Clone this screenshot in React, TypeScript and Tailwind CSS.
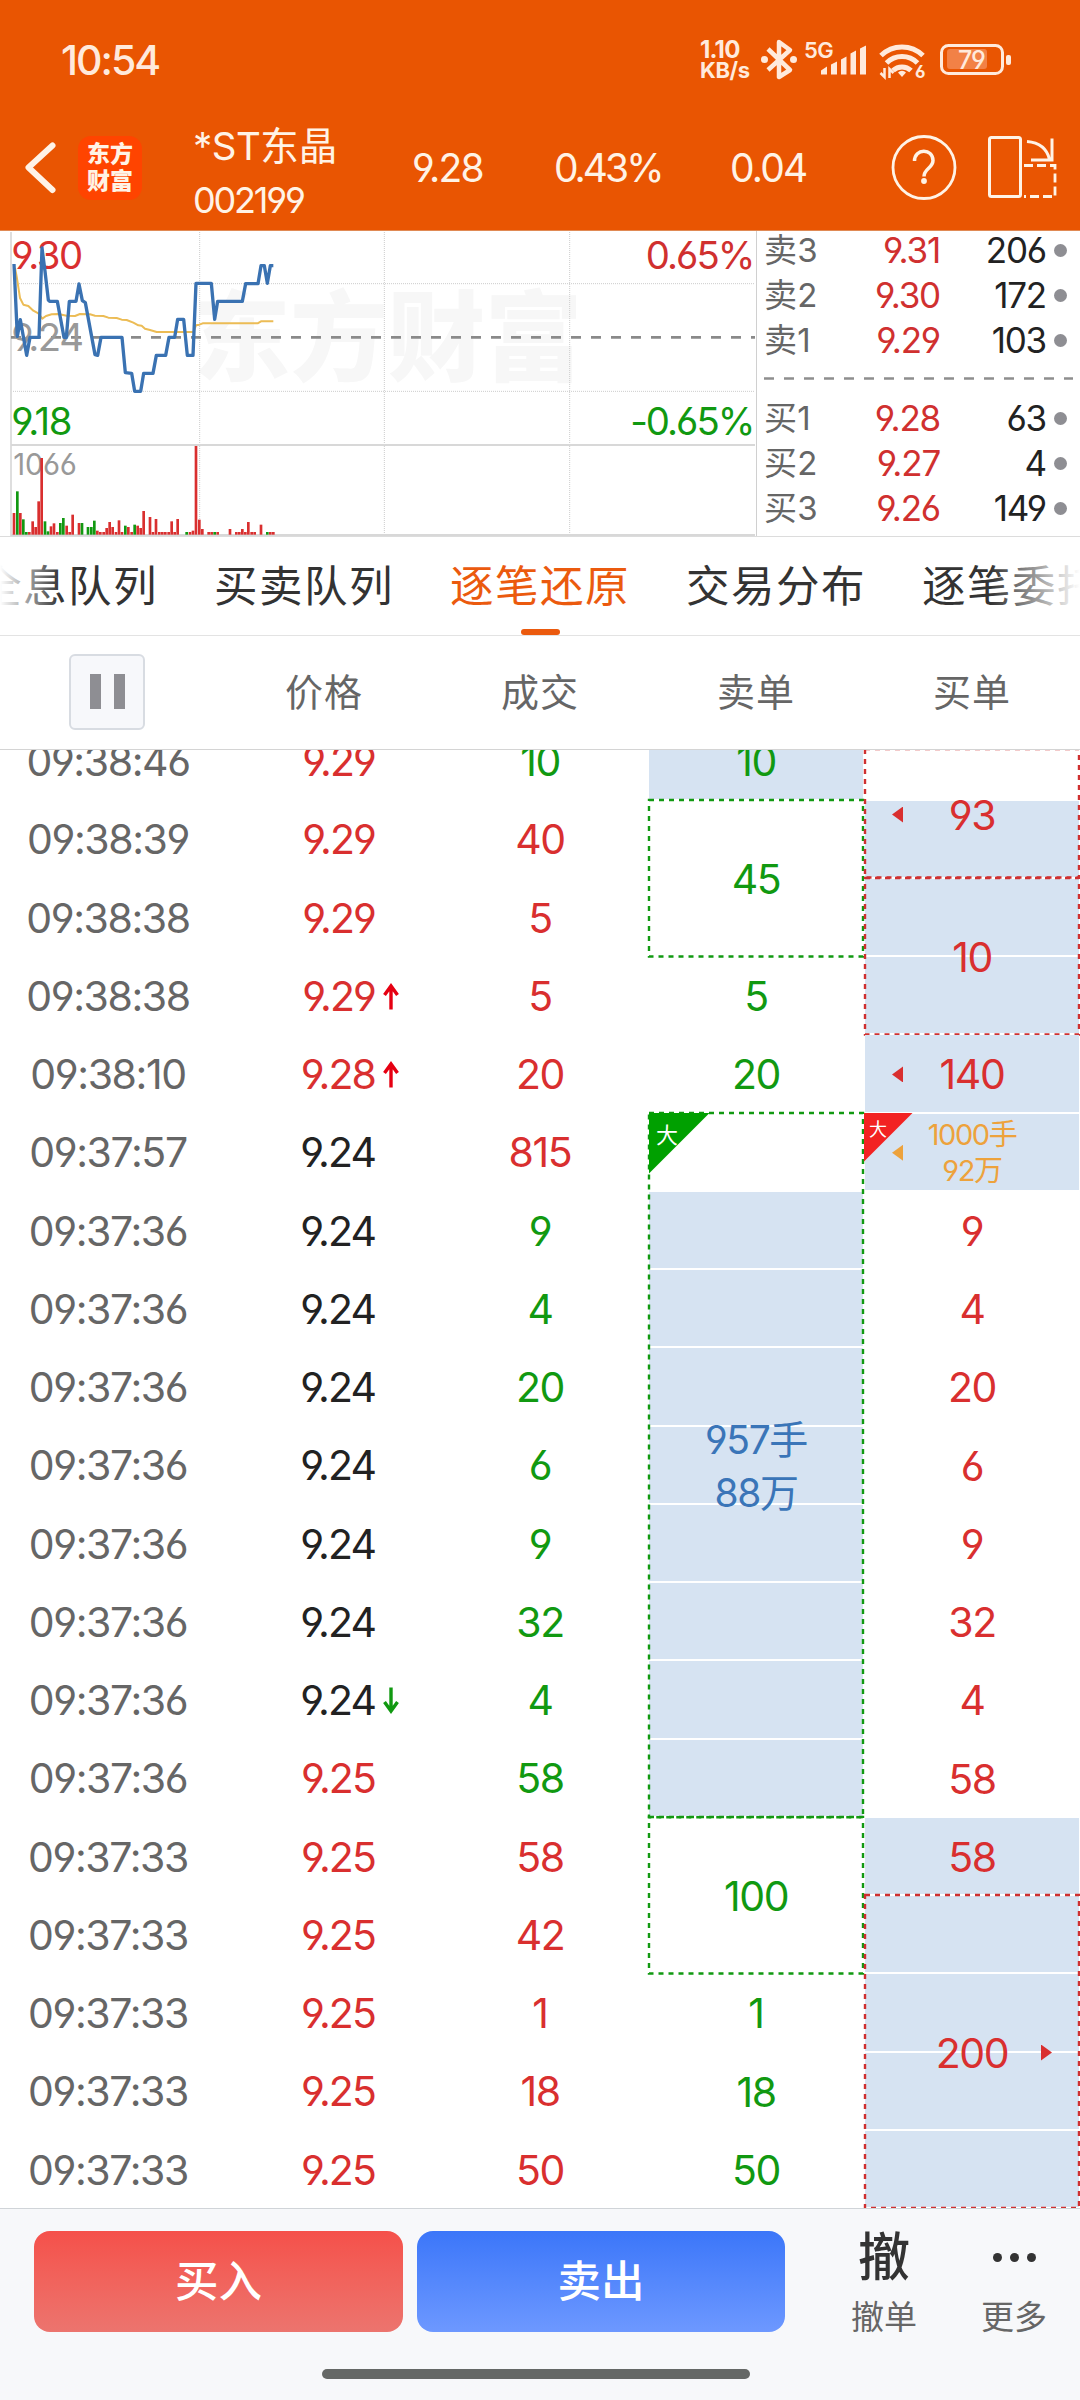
import React from 'react';

type Tone = 'red' | 'green' | 'dark' | 'blue' | 'orange';

interface Tick {
  time: string;
  price: string;
  priceTone: Tone;
  volume: string;
  volumeTone: Tone;
  arrow?: 'up' | 'down';
}

interface OrderBlock {
  // one entry per row, true when the row is shaded
  cells: boolean[];
  lines: string[];
  tone: Tone;
  boxed?: boolean;
  big?: boolean;
  small?: boolean;
  pointer?: 'left' | 'right';
  clipped?: boolean;
}

const toneClass: Record<Tone, string> = {
  red: 'text-[#d92f2f]',
  green: 'text-[#119911]',
  dark: 'text-[#222222]',
  blue: 'text-[#3a75b8]',
  orange: 'text-[#eda23c]',
};

const tick = (
  time: string,
  price: string,
  priceTone: Tone,
  volume: string,
  volumeTone: Tone,
  arrow?: 'up' | 'down',
): Tick => ({ time, price, priceTone, volume, volumeTone, arrow });

const ticks: Tick[] = [
  tick('09:38:46', '9.29', 'red', '10', 'green'),
  tick('09:38:39', '9.29', 'red', '40', 'red'),
  tick('09:38:38', '9.29', 'red', '5', 'red'),
  tick('09:38:38', '9.29', 'red', '5', 'red', 'up'),
  tick('09:38:10', '9.28', 'red', '20', 'red', 'up'),
  tick('09:37:57', '9.24', 'dark', '815', 'red'),
  tick('09:37:36', '9.24', 'dark', '9', 'green'),
  tick('09:37:36', '9.24', 'dark', '4', 'green'),
  tick('09:37:36', '9.24', 'dark', '20', 'green'),
  tick('09:37:36', '9.24', 'dark', '6', 'green'),
  tick('09:37:36', '9.24', 'dark', '9', 'green'),
  tick('09:37:36', '9.24', 'dark', '32', 'green'),
  tick('09:37:36', '9.24', 'dark', '4', 'green', 'down'),
  tick('09:37:36', '9.25', 'red', '58', 'green'),
  tick('09:37:33', '9.25', 'red', '58', 'red'),
  tick('09:37:33', '9.25', 'red', '42', 'red'),
  tick('09:37:33', '9.25', 'red', '1', 'red'),
  tick('09:37:33', '9.25', 'red', '18', 'red'),
  tick('09:37:33', '9.25', 'red', '50', 'red'),
];

const single = (text: string, tone: Tone, shaded = false): OrderBlock => ({
  cells: [shaded],
  lines: [text],
  tone,
});

const sellOrders: OrderBlock[] = [
  single('10', 'green', true),
  { cells: [false, false], lines: ['45'], tone: 'green', boxed: true },
  single('5', 'green'),
  single('20', 'green'),
  {
    cells: [false, true, true, true, true, true, true, true, true],
    lines: ['957手', '88万'],
    tone: 'blue',
    boxed: true,
    big: true,
  },
  { cells: [false, false], lines: ['100'], tone: 'green', boxed: true },
  single('1', 'green'),
  single('18', 'green'),
  single('50', 'green'),
];

const buyOrders: OrderBlock[] = [
  { cells: [false, true], lines: ['93'], tone: 'red', boxed: true, pointer: 'left', clipped: true },
  { cells: [true, true], lines: ['10'], tone: 'red', boxed: true },
  { cells: [true], lines: ['140'], tone: 'red', pointer: 'left' },
  { cells: [true], lines: ['1000手', '92万'], tone: 'orange', big: true, small: true, pointer: 'left' },
  single('9', 'red'),
  single('4', 'red'),
  single('20', 'red'),
  single('6', 'red'),
  single('9', 'red'),
  single('32', 'red'),
  single('4', 'red'),
  single('58', 'red'),
  single('58', 'red', true),
  { cells: [true, true, true, true], lines: ['200'], tone: 'red', boxed: true, pointer: 'right' },
];

const asks = [
  ['卖3', '9.31', '206'],
  ['卖2', '9.30', '172'],
  ['卖1', '9.29', '103'],
];

const bids = [
  ['买1', '9.28', '63'],
  ['买2', '9.27', '4'],
  ['买3', '9.26', '149'],
];

const tabs = ['全息队列', '买卖队列', '逐笔还原', '交易分布', '逐笔委托'];

const pricePoints =
  '42,108 52,325 61,275 80,382 90,328 117,328 126,60 135,130 145,216 149,220 172,220 192,328 199,328 208,220 228,220 237,168 247,218 256,224 285,380 293,382 303,328 366,328 376,434 395,436 404,490 422,490 431,436 459,436 469,382 497,382 507,328 524,328 533,274 551,274 562,382 579,382 588,166 634,166 644,274 653,220 727,220 737,167 774,167 783,113 793,113 802,166 811,113 820,113';

const averagePoints =
  '45,120 50,145 60,210 70,230 85,234 100,248 115,256 127,272 138,264 155,259 175,258 200,263 225,264 240,258 270,259 285,263 310,264 325,269 350,270 365,275 380,276 400,284 415,292 425,293 435,302 450,306 470,312 580,312 588,292 598,290 608,286 773,286 783,280 820,280';

// [x, top, up]
const volumeBars: [number, number, 0 | 1][] = [
  [42, 855, 1], [52, 790, 0], [61, 855, 1], [70, 874, 0], [79, 912, 0], [88, 912, 1],
  [98, 880, 1], [107, 897, 1], [116, 820, 1], [125, 690, 1], [135, 880, 0], [144, 910, 0],
  [153, 895, 1], [162, 886, 1], [172, 912, 1], [181, 885, 0], [190, 870, 0], [200, 893, 1],
  [209, 912, 1], [218, 860, 1], [237, 885, 1], [246, 885, 0], [264, 897, 0], [274, 897, 0],
  [283, 878, 0], [292, 908, 1], [301, 912, 1], [311, 912, 1], [320, 900, 1], [329, 882, 1],
  [338, 897, 1], [348, 912, 1], [357, 877, 1], [366, 912, 1], [376, 893, 0], [385, 897, 1],
  [395, 912, 1], [404, 890, 0], [413, 893, 1], [422, 900, 1], [431, 849, 1], [450, 867, 1],
  [459, 912, 1], [468, 873, 1], [478, 912, 1], [487, 912, 1], [496, 912, 1], [506, 912, 1],
  [515, 880, 1], [524, 912, 1], [533, 873, 1], [560, 912, 0], [570, 912, 1], [579, 908, 1],
  [588, 654, 1], [598, 875, 1], [607, 903, 1], [626, 912, 1], [635, 912, 1], [644, 912, 0],
  [653, 912, 1], [690, 903, 1], [709, 912, 1], [718, 912, 1], [727, 903, 1], [736, 912, 1],
  [745, 882, 1], [755, 912, 1], [764, 912, 1], [783, 890, 1], [802, 912, 0], [811, 912, 1],
  [820, 912, 1],
];

const StatusBar: React.FC = () => (
  <div className="flex h-[116px] items-start pl-[61px] pt-[30px] text-[#ffeadc]">
    <span className="mt-[10px] w-[639px] text-[41px] font-medium leading-[40px] tracking-[-2px]">10:54</span>
    <div className="mt-[9px] w-[61px] text-[24px] font-bold leading-[21px] tracking-[-0.8px]">
      <div>1.10</div>
      <div className="text-[22px] tracking-[-0.4px]">KB/s</div>
    </div>
    <svg className="w-[250px] shrink-0" height="60" viewBox="761 30 250 60" fill="none">
      <path d="M768 49 L790 70 L779 77 V42 L790 50 L768 70" stroke="currentColor" strokeWidth="4.5" strokeLinejoin="round" />
      <circle cx="764.5" cy="59.5" r="3.5" fill="currentColor" />
      <circle cx="793.5" cy="59.5" r="3.5" fill="currentColor" />
      <text x="804" y="57.5" fontSize="22" fontWeight="600" fill="currentColor" letterSpacing="-0.6">5G</text>
      <g fill="currentColor">
        <path d="M821 74.500v-4l6-4v8zM831 74.500v-10l6-3v13zM841 74.500v-15l5.500-3v18zM850.500 74.500v-21l5.500-3v24zM860 74.500v-26l6-3v29z" />
        <path d="M902 77l-4-4.500a5.500 5.500 0 0 1 8 0z" />
      </g>
      <path d="M881 55.500a30 30 0 0 1 42 0M886.500 63a22 22 0 0 1 31 0M893 70.500a13 13 0 0 1 18 0" stroke="currentColor" strokeWidth="5" />
      <path d="M884.500 68v9l-4-4M889.500 78v-9l4 4" stroke="currentColor" strokeWidth="2.500" />
      <text x="915" y="78" fontSize="17" fontWeight="700" fill="currentColor">6</text>
      <rect x="941.500" y="45.500" width="61" height="28" rx="7" stroke="currentColor" strokeWidth="3" />
      <rect x="947" y="49" width="40" height="20" rx="3" fill="#f28146" />
      <rect x="1006" y="55" width="5" height="10" rx="2" fill="currentColor" />
      <text x="958" y="69" fontSize="25" fontWeight="500" fill="currentColor" letterSpacing="-1.200">79</text>
    </svg>
  </div>
);

const TitleBar: React.FC = () => (
  <div className="flex h-[114px] items-start text-[#fff3e6]">
    <svg className="mt-[20px] w-[78px] shrink-0" height="64" viewBox="0 136 78 64" fill="none">
      <path d="M52.500 145.500 L28.500 167.500 L52.500 190" stroke="currentColor" strokeWidth="6" strokeLinecap="round" strokeLinejoin="round" />
    </svg>
    <div className="mt-[20px] flex h-[64px] w-[64px] flex-col items-center justify-center rounded-[13px] bg-[#ff4400] text-[23px] font-black leading-[27px]">
      <div>东方</div>
      <div>财富</div>
    </div>
    <div className="ml-[51px] w-[218px]">
      <div className="mt-[6px] text-[38.5px] leading-[48px]">
        <span className="tracking-[-0.500px]">*ST</span>东晶
      </div>
      <div className="mt-[8px] text-[36px] leading-[44px] tracking-[-2.200px]">002199</div>
    </div>
    <div className="mt-[28px] flex text-[39px] leading-[48px] tracking-[-1.800px]">
      <span className="w-[143px] pl-px">9.28</span>
      <span className="w-[176px] tracking-[-3px]">0.43%</span>
      <span className="w-[160px]">0.04</span>
    </div>
    <svg className="w-[170px] shrink-0" height="90" viewBox="890 116 170 90" fill="none" stroke="currentColor" strokeWidth="2.800">
      <circle cx="924" cy="167.500" r="31" />
      <path d="M914.500 161c0-13 18.500-13 18.500-0.500 0 7.500-9 8-9 16" strokeWidth="3.500" />
      <circle cx="924" cy="181" r="1.500" fill="currentColor" />
      <rect x="989.500" y="137.500" width="31" height="59" rx="2" strokeWidth="3" />
      <path d="M1024 165.500h31v31h-31" strokeDasharray="9 4" />
      <path d="M1027 141.500c12 1 20 7 22.500 18M1052 138.500v21.500h-21" strokeWidth="3" />
    </svg>
  </div>
);

const MinuteChart: React.FC = () => (
  <svg className="h-[305px] w-[756px] shrink-0" viewBox="0 9 2268 915">
    <g fontSize="292" fontWeight="900" fill="#f7f7f7" textAnchor="middle">
      <text x="725" y="435">东</text>
      <text x="1017" y="435">方</text>
      <text x="1309" y="435">财</text>
      <text x="1601" y="435">富</text>
    </g>
    <g stroke="#cccccc" strokeWidth="3" strokeDasharray="3 3">
      <path d="M33 167H2265M33 490H2265M599 12V920M1153 12V920M1709 12V920" />
    </g>
    <path d="M33 12V924" stroke="#dedede" strokeWidth="6" />
    <path d="M33 651H2265M33 921H2265" stroke="#d8d8d8" strokeWidth="6" />
    <path d="M33 328H2265" stroke="#8a8a8a" strokeWidth="8" strokeDasharray="30 30" />
    <g fontSize="115" letterSpacing="-4.500">
      <text x="34" y="122" fill="#d92f2f">9.30</text>
      <text x="34" y="370" fill="#999999">9.24</text>
      <text x="34" y="622" fill="#119911">9.18</text>
      <text x="2260" y="122" fill="#d0302f" textAnchor="end" letterSpacing="-6">0.65%</text>
      <text x="2260" y="622" fill="#119911" textAnchor="end" letterSpacing="-6">-0.65%</text>
      <text x="40" y="742" fill="#999999" fontSize="88" letterSpacing="-1">1066</text>
    </g>
    <polyline points={averagePoints} fill="none" stroke="#ecbc55" strokeWidth="6" strokeLinejoin="round" />
    <polyline points={pricePoints} fill="none" stroke="#3a72b2" strokeWidth="10" strokeLinejoin="round" />
    {volumeBars.map(([x, top, up]) => (
      <rect key={x} x={x - 4} y={top} width="8" height={920 - top} fill={up ? '#d92f2f' : '#119911'} />
    ))}
  </svg>
);

const QuoteRow: React.FC<{ row: string[] }> = ({ row }) => (
  <div className="flex h-[45px] items-center text-[35px] leading-[45px] tracking-[-1.200px]">
    <span className="w-[64px] text-[33px] tracking-[0.300px] text-[#666666]">{row[0]}</span>
    <span className="w-[112px] text-right text-[#d0302f]">{row[1]}</span>
    <span className="w-[106px] text-right text-[#222222]">{row[2]}</span>
    <span className="ml-[8px] h-[13px] w-[13px] rounded-full bg-[#8e8e93]" />
  </div>
);

const OrderBook: React.FC = () => (
  <div className="h-[305px] w-[324px] border-l border-[#d0d0d0] pl-[7px]">
    <div className="-mt-[3px]">
      {asks.map((row) => (
        <QuoteRow key={row[0]} row={row} />
      ))}
    </div>
    <svg className="h-[33px] w-[310px]" viewBox="0 0 310 33">
      <path d="M0 15.500H309" stroke="#8e8e8e" strokeWidth="2.500" strokeDasharray="10 10" />
    </svg>
    <div>
      {bids.map((row) => (
        <QuoteRow key={row[0]} row={row} />
      ))}
    </div>
  </div>
);

const TabBar: React.FC = () => (
  <div className="relative h-[99px] overflow-hidden border-b border-[#e3e3e3]">
    <div className="-ml-[23px] flex w-[1200px] gap-[54px] text-[43.5px] tracking-[1.500px]">
      {tabs.map((tab) => (
        <div
          key={tab}
          className={
            tab === '逐笔还原'
              ? 'flex w-[182px] shrink-0 flex-col items-center whitespace-nowrap text-[#eb5a0e]'
              : 'flex w-[182px] shrink-0 flex-col items-center whitespace-nowrap text-[#333333]'
          }
        >
          <span className="mt-[17px] leading-[64px]">{tab}</span>
          {tab === '逐笔还原' && <span className="mt-[11px] h-[6px] w-[39px] rounded-full bg-[#eb5a0e]" />}
        </div>
      ))}
    </div>
    <div className="absolute left-0 top-0 h-[90px] w-[60px] bg-linear-to-r from-white to-transparent" />
    <div className="absolute right-0 top-0 h-[90px] w-[90px] bg-linear-to-l from-white to-transparent" />
  </div>
);

const ColumnHeader: React.FC = () => (
  <div className="grid h-[114px] grid-cols-5 items-center border-b border-[#d4d4d4] text-center text-[38px] tracking-[1px] text-[#666666]">
    <div className="flex -translate-x-px -translate-y-px justify-center">
      <button className="flex h-[76px] w-[76px] items-center justify-center gap-[13px] rounded-[6px] border-2 border-[#d8dce2] bg-[#f7f8fb]">
        <span className="h-[35px] w-[11px] bg-[#8e8e93]" />
        <span className="h-[35px] w-[11px] bg-[#8e8e93]" />
      </button>
    </div>
    <span>价格</span>
    <span>成交</span>
    <span>卖单</span>
    <span>买单</span>
  </div>
);

const PriceArrow: React.FC<{ dir: 'up' | 'down' }> = ({ dir }) => (
  <svg
    className={dir === 'up' ? 'h-[27px] w-[16px] text-[#e60012]' : 'h-[27px] w-[16px] rotate-180 text-[#119911]'}
    viewBox="0 0 16 27"
    fill="none"
  >
    <path d="M8 2.500V26.500M1.500 12L8 3L14.500 12" stroke="currentColor" strokeWidth="3.400" />
  </svg>
);

const TickRow: React.FC<{ row: Tick }> = ({ row }) => (
  <div className="grid h-[78.25px] shrink-0 grid-cols-3 items-center pt-[3px]">
    <span className="text-center text-[#666666]">{row.time}</span>
    <span className="flex items-center gap-[8px]">
      <span className={`w-[159px] text-right tracking-[-1.900px] ${toneClass[row.priceTone]}`}>{row.price}</span>
      {row.arrow && <PriceArrow dir={row.arrow} />}
    </span>
    <span className={`text-center ${toneClass[row.volumeTone]}`}>{row.volume}</span>
  </div>
);

const BigBadge: React.FC<{ side: 'sell' | 'buy' }> = ({ side }) =>
  side === 'sell' ? (
    <div className="absolute left-px top-0 h-[61px] w-[61px] bg-[#00a000] pl-[7px] pt-[10px] text-[22px] leading-[24px] tracking-normal text-white [clip-path:polygon(0_0,100%_0,0_100%)]">
      大
    </div>
  ) : (
    <div className="absolute left-0 top-0 h-[49px] w-[49px] bg-[#f22222] pl-[5px] pt-[7px] text-[18px] leading-[20px] tracking-normal text-white [clip-path:polygon(0_0,100%_0,0_100%)]">
      大
    </div>
  );

const Block: React.FC<{ block: OrderBlock; side: 'sell' | 'buy' }> = ({ block, side }) => (
  <div
    className={
      block.clipped
        ? 'relative flex h-[128.5px] shrink-0 flex-col justify-end'
        : 'relative flex shrink-0 flex-col'
    }
  >
    {block.cells.map((shaded, i) => (
      <div key={i} className={block.clipped && i === 0 ? 'h-[50.25px] px-px' : 'h-[78.25px] px-px py-px'}>
        {shaded && <div className="h-full bg-[#d6e3f2]" />}
      </div>
    ))}
    {block.boxed && (
      <svg className="absolute left-px top-0 h-full w-[214px] overflow-visible" fill="none">
        <rect
          width="100%"
          height="100%"
          stroke={side === 'sell' ? '#119911' : '#cf3030'}
          strokeWidth="2.400"
          strokeDasharray="5 5"
        />
      </svg>
    )}
    {block.big && <BigBadge side={side} />}
    <div className={`absolute inset-0 flex flex-col items-center justify-center pt-[2px] ${toneClass[block.tone]}`}>
      {block.lines.map((line) => (
        <span
          key={line}
          className={
            block.small
              ? 'text-[29px] leading-[36px]'
              : block.lines.length > 1
                ? 'text-[39px] leading-[53px]'
                : 'leading-[50px]'
          }
        >
          {line}
        </span>
      ))}
    </div>
    {block.pointer && (
      <div className="absolute inset-0 flex items-center justify-between px-[28px] pt-[2px]">
        {block.pointer === 'right' && <span />}
        <span
          className={
            block.pointer === 'left'
              ? `h-[16px] w-[11px] bg-current [clip-path:polygon(100%_0,100%_100%,0_50%)] ${toneClass[block.tone]}`
              : `h-[16px] w-[11px] bg-current [clip-path:polygon(0_0,100%_50%,0_100%)] ${toneClass[block.tone]}`
          }
        />
      </div>
    )}
  </div>
);

const TickTable: React.FC = () => (
  <div className="flex h-[1458px] overflow-hidden text-[41px] tracking-[-1.400px]">
    <div className="flex w-[648px] flex-col justify-end">
      {ticks.map((row, i) => (
        <TickRow key={i} row={row} />
      ))}
    </div>
    <div className="flex w-[216px] flex-col justify-end">
      {sellOrders.map((block, i) => (
        <Block key={i} block={block} side="sell" />
      ))}
    </div>
    <div className="flex w-[216px] flex-col justify-end">
      {buyOrders.map((block, i) => (
        <Block key={i} block={block} side="buy" />
      ))}
    </div>
  </div>
);

const TradeBar: React.FC = () => (
  <div className="relative h-[192px] border-t border-[#d0d4d8] bg-[#f7f8fa]">
    <div className="flex h-[160px] items-start pl-[34px] pt-[22px]">
      <button className="h-[101px] w-[369px] rounded-[16px] bg-linear-to-b from-[#f5504a] to-[#ec746e] text-[43.5px] font-medium text-white">
        买入
      </button>
      <button className="ml-[14px] h-[101px] w-[368px] rounded-[16px] bg-linear-to-b from-[#3b76f9] to-[#6d98ff] text-[43.5px] font-medium text-white">
        卖出
      </button>
      <div className="ml-[32px] flex w-[134px] flex-col items-center">
        <span className="mt-[2px] text-[52px] font-medium leading-[50px] text-[#333333]">撤</span>
        <span className="mt-[12px] text-[33px] leading-[44px] text-[#666666]">撤单</span>
      </div>
      <div className="flex w-[126px] flex-col items-center">
        <span className="mt-px flex h-[50px] items-center gap-[8px]">
          <i className="h-[9px] w-[9px] rounded-full bg-[#333333]" />
          <i className="h-[9px] w-[9px] rounded-full bg-[#333333]" />
          <i className="h-[9px] w-[9px] rounded-full bg-[#333333]" />
        </span>
        <span className="mt-[13px] text-[33px] leading-[44px] text-[#666666]">更多</span>
      </div>
    </div>
    <div className="mx-auto h-[10px] w-[428px] translate-x-[-4px] rounded-full bg-[#656866]" />
  </div>
);

const App: React.FC = () => {
  return (
    <div className="h-[2400px] w-[1080px] overflow-hidden bg-white font-['Inter','Noto_Sans_CJK_SC',sans-serif] [font-feature-settings:'cv03','cv04']">
      <div className="h-[231px] border-b border-[#e08a55] bg-[#e95502]">
        <StatusBar />
        <TitleBar />
      </div>
      <div className="flex h-[306px] border-b border-[#dcdcdc]">
        <MinuteChart />
        <OrderBook />
      </div>
      <TabBar />
      <ColumnHeader />
      <TickTable />
      <TradeBar />
    </div>
  );
};

export default App;
